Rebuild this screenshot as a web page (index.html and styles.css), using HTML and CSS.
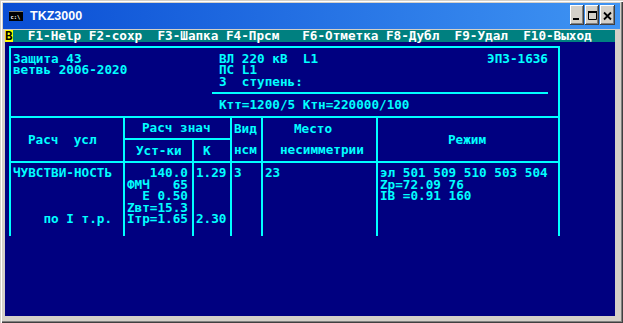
FILE: index.html
```html
<!DOCTYPE html>
<html>
<head>
<meta charset="utf-8">
<title>TKZ3000</title>
<link rel="stylesheet" href="styles.css">
</head>
<body>
<div class="window">
  <div class="titlebar">
    <svg class="appicon" width="14" height="10" viewBox="0 0 14 10"><rect x="0" y="0" width="14" height="10" fill="#000"/><rect x="0" y="0" width="14" height="1" fill="#808080"/><text x="1.5" y="7.5" font-family="DejaVu Sans Mono, monospace" font-size="5.5" font-weight="bold" fill="#fff">c:\</text></svg>
    <span class="title">TKZ3000</span>
    <div class="buttons">
      <span class="btn"><svg width="14" height="20" viewBox="0 0 14 20"><rect x="3" y="13" width="6" height="2" fill="#000"/></svg></span>
      <span class="btn"><svg width="14" height="20" viewBox="0 0 14 20"><path d="M3.5 6.5H11.5V14.5H3.5Z" fill="none" stroke="#000"/><rect x="3" y="6" width="9" height="2" fill="#000"/></svg></span>
      <span class="btn btn-close"><svg width="15" height="20" viewBox="0 0 15 20"><path d="M4 7.5L11 14.5M11 7.5L4 14.5" stroke="#000" stroke-width="1.8" fill="none"/></svg></span>
    </div>
  </div>
  <div class="client">
    <div class="menubar"><span class="hot">B</span>  F1-Help F2-сохр  F3-Шапка F4-Прсм   F6-Отметка F8-Дубл  F9-Удал  F10-Выход</div>
    <div class="panel">
      <div class="head">
        <div class="head-left">
          <div class="l">Защита 43</div>
          <div class="l">ветвь 2006-2020</div>
        </div>
        <div class="head-right">
          <div class="l split"><span>ВЛ 220 кВ  L1</span><span>ЭПЗ-1636</span></div>
          <div class="l ind">ПС L1</div>
          <div class="l ind">3  ступень:</div>
          <div class="rule"></div>
          <div class="l ind">Ктт=1200/5 Ктн=220000/100</div>
        </div>
      </div>
      <div class="grid">
        <div class="cell h-usl bb"><span class="l">Расч  усл</span></div>
        <div class="cell h-znach bl bb"><span class="l">Расч знач</span></div>
        <div class="cell h-ust bl bb"><span class="l">Уст-ки</span></div>
        <div class="cell h-k bl bb"><span class="l">К</span></div>
        <div class="cell h-vid bl bb"><div class="top l">Вид</div><div class="bot l">нсм</div></div>
        <div class="cell h-mesto bl bb"><div class="top l p-mesto">Место</div><div class="bot l p-nesim">несимметрии</div></div>
        <div class="cell h-rezh bl bb"><span class="l">Режим</span></div>

        <div class="cell body"><div class="l">ЧУВСТВИ-НОСТЬ</div><div class="l"></div><div class="l"></div><div class="l"></div><div class="l">    по I т.р.</div></div>
        <div class="cell body bl"><div class="l">   140.0</div><div class="l">ФМЧ   65</div><div class="l">  Е 0.50</div><div class="l">Zвт=15.3</div><div class="l">Iтр=1.65</div></div>
        <div class="cell body bl"><div class="l">1.29</div><div class="l"></div><div class="l"></div><div class="l"></div><div class="l">2.30</div></div>
        <div class="cell body bl"><div class="l">3</div></div>
        <div class="cell body bl"><div class="l">23</div></div>
        <div class="cell body bl"><div class="l">эл 501 509 510 503 504</div><div class="l">Zр=72.09 76</div><div class="l">IВ =0.91 160</div></div>
      </div>
    </div>
  </div>
</div>
</body>
</html>
```

FILE: styles.css
```css
* {
  box-sizing: border-box;
  margin: 0;
  padding: 0;
}

html, body {
  margin: 0;
  width: 623px;
  height: 323px;
  overflow: hidden;
  background: #D4D0C8;
}

.window {
  width: 623px;
  height: 323px;
  padding-top: 3px;
  background: #D4D0C8;
  box-shadow: inset 1px 1px 0 #D4D0C8, inset 2px 2px 0 #FFFFFF, inset -1px -1px 0 #404040, inset -2px -2px 0 #808080;
}

.titlebar {
  margin: 0 3px;
  height: 26px;
  display: flex;
  align-items: center;
  padding: 0 5px 0 6px;
  background: linear-gradient(to right, #0A4ED4, #3F94F3);
}

.appicon {
  display: block;
  margin-right: 7px;
}

.title {
  font: bold 12.5px "Liberation Sans", Arial, sans-serif;
  color: #FFFFFF;
}

.buttons {
  margin-left: auto;
  align-self: flex-start;
  margin-top: 2px;
  display: flex;
  gap: 1px;
}

.btn {
  display: block;
  width: 14px;
  height: 20px;
  background: #D4D0C8;
  box-shadow: inset -1px -1px 0 #404040, inset 1px 1px 0 #FFFFFF, inset -2px -2px 0 #808080;
}

.btn svg {
  display: block;
}

.btn-close {
  width: 15px;
}

.client {
  margin: 1px 0 0 5px;
  width: 610px;
  height: 286px;
  background: #000080;
  color: #00FFFF;
  font-family: "DejaVu Sans Mono", "Liberation Mono", monospace;
  font-weight: bold;
  font-size: 12.664px;
  line-height: 11.44px;
}

.l {
  white-space: pre;
  height: 11.44px;
}

.menubar {
  height: 12px;
  line-height: 12px;
  background: #008080;
  color: #FFFFFF;
  white-space: pre;
}

.hot {
  display: inline-block;
  width: 7.625px;
  background: #FFFF00;
  color: #000000;
}

.panel {
  margin: 4px 0 0 4px;
  width: 551px;
  border: 2px solid #00FFFF;
  border-bottom: 0;
}

.head {
  display: flex;
  height: 68px;
  padding-top: 4.9px;
}

.head-left {
  width: 201px;
  padding-left: 2px;
}

.head-right {
  width: 336px;
}

.ind {
  padding-left: 7px;
}

.split {
  display: flex;
  justify-content: space-between;
  padding-left: 7px;
}

.rule {
  height: 11.44px;
  display: flex;
  align-items: center;
}

.rule::before {
  content: "";
  flex: 1;
  height: 2px;
  background: #00FFFF;
}

.grid {
  display: grid;
  grid-template-columns: 112px 69px 38px 31px 115px 182px;
  grid-template-rows: 22px 23px 73px;
  border-top: 2px solid #00FFFF;
}

.bl {
  border-left: 2px solid #00FFFF;
}

.bb {
  border-bottom: 2px solid #00FFFF;
}

.cell {
  min-width: 0;
}

.h-usl {
  grid-column: 1;
  grid-row: 1 / span 2;
  display: flex;
  align-items: center;
  padding-left: 17px;
}

.h-znach {
  grid-column: 2 / span 2;
  grid-row: 1;
  display: flex;
  align-items: center;
  padding-left: 17px;
}

.h-ust {
  grid-column: 2;
  grid-row: 2;
  display: flex;
  align-items: center;
  padding-left: 11px;
}

.h-k {
  grid-column: 3;
  grid-row: 2;
  display: flex;
  align-items: center;
  padding-left: 9px;
}

.h-vid {
  grid-column: 4;
  grid-row: 1 / span 2;
  padding-left: 2px;
}

.h-mesto {
  grid-column: 5;
  grid-row: 1 / span 2;
}

.top {
  height: 21px;
  line-height: 21px;
}

.bot {
  height: 22px;
  line-height: 22px;
}

.p-mesto {
  padding-left: 31px;
}

.p-nesim {
  padding-left: 17px;
}

.h-rezh {
  grid-column: 6;
  grid-row: 1 / span 2;
  display: flex;
  align-items: center;
  padding-left: 70px;
}

.body {
  grid-row: 3;
  padding: 4.3px 0 0 2px;
}
```
